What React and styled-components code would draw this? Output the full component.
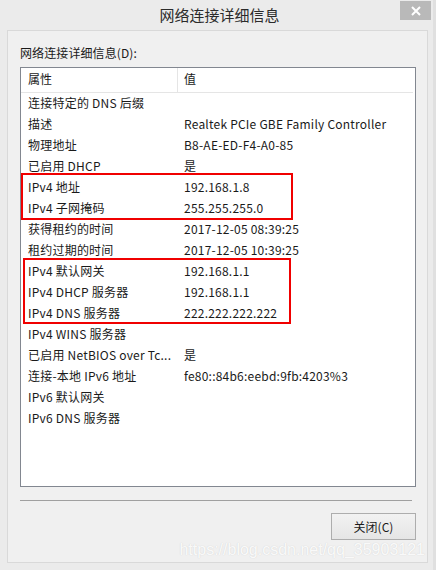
import React from "react";
import styled, { createGlobalStyle } from "styled-components";

const Global = createGlobalStyle`
  html, body { margin: 0; padding: 0; }
  body { width: 436px; height: 570px; overflow: hidden; background: #ebebeb;
    font-family: "Noto Sans CJK SC", "Noto Sans", sans-serif; }
`;

const Frame = styled.div`
  box-sizing: border-box;
  width: 436px;
  height: 570px;
  background: #ebebeb;
  border-right: 3px solid #e0e0e0;
  padding: 0 5px 7px 7px;
  display: flex;
  flex-direction: column;
`;

const TitleBar = styled.div`
  height: 30px;
  flex: none;
  display: flex;
  align-items: flex-start;
  justify-content: center;
  position: relative;
`;

const Title = styled.div`
  font-size: 15px;
  line-height: 30px;
  color: #2b2b2b;
  margin-left: 4px;
`;

const CloseBtn = styled.div`
  position: absolute;
  right: -3px;
  top: 1px;
  width: 31px;
  height: 19px;
  background: #b9b9b9;
  display: flex;
  align-items: center;
  justify-content: center;
`;

const Panel = styled.div`
  flex: 1;
  border: 1px solid #d9d9d9;
  background: #f0f0f0;
  padding: 12px 12px 0 12px;
  display: flex;
  flex-direction: column;
`;

const Label = styled.div`
  font-size: 12px;
  color: #1a1a1a;
  line-height: 20px;
  margin-bottom: 4px;
  letter-spacing: 0.1px;
`;

const ListBox = styled.div`
  height: 420px;
  width: 396px;
  box-sizing: border-box;
  border: 1px solid #828790;
  background: #fff;
  display: flex;
  flex-direction: column;
`;

const Header = styled.div`
  display: grid;
  grid-template-columns: 157px 1fr;
  height: 24px;
  border-bottom: 1px solid #e5e5e5;
  margin-right: 2px;
`;

const HeadCell = styled.div`
  font-size: 12px;
  color: #1a1a1a;
  line-height: 22px;
  padding-left: ${(p) => (p.$first ? "7px" : "6px")};
  border-right: ${(p) => (p.$first ? "1px solid #e5e5e5" : "none")};
`;

const Rows = styled.div`
  margin-top: -1px;
  display: flex;
  flex-direction: column;
`;

const Group = styled.div`
  position: relative;
`;

const RedBox = styled.div`
  position: absolute;
  left: ${(p) => p.$l}px;
  width: ${(p) => p.$w}px;
  top: ${(p) => p.$t}px;
  bottom: ${(p) => p.$b}px;
  border: 2px solid #f00000;
  pointer-events: none;
`;

const Row = styled.div`
  display: grid;
  grid-template-columns: 156px 1fr;
  height: 21px;
  align-items: center;
  font-size: 12px;
  color: #1a1a1a;
  white-space: nowrap;
  letter-spacing: 0.22px;
`;

const Cell = styled.div`
  padding-left: 7px;
  overflow: hidden;
  line-height: 21px;
`;

const Separator = styled.div`
  height: 1px;
  background: #a0a0a0;
  margin: 13px 3px 0 0;
`;

const Footer = styled.div`
  display: flex;
  justify-content: flex-end;
  margin-top: 12px;
  position: relative;
  height: 48px;
`;

const Button = styled.div`
  width: 85px;
  height: 27px;
  box-sizing: border-box;
  border: 1px solid #adadad;
  background: linear-gradient(#f2f2f2, #e5e5e5);
  font-size: 12px;
  color: #1a1a1a;
  display: flex;
  align-items: center;
  justify-content: center;
  margin-right: -1px;
`;

const Watermark = styled.div`
  position: absolute;
  right: -10px;
  top: 28px;
  font-family: "Liberation Sans", Arial, sans-serif;
  font-size: 16px;
  color: rgba(255, 255, 255, 0.9);
  text-shadow: 0 0 1px rgba(160, 160, 160, 0.45);
  white-space: nowrap;
`;

const rowsA = [
  ["连接特定的 DNS 后缀", ""],
  ["描述", "Realtek PCIe GBE Family Controller"],
  ["物理地址", "B8-AE-ED-F4-A0-85"],
  ["已启用 DHCP", "是"],
];
const rowsB = [
  ["IPv4 地址", "192.168.1.8"],
  ["IPv4 子网掩码", "255.255.255.0"],
];
const rowsC = [
  ["获得租约的时间", "2017-12-05 08:39:25"],
  ["租约过期的时间", "2017-12-05 10:39:25"],
];
const rowsD = [
  ["IPv4 默认网关", "192.168.1.1"],
  ["IPv4 DHCP 服务器", "192.168.1.1"],
  ["IPv4 DNS 服务器", "222.222.222.222"],
];
const rowsE = [
  ["IPv4 WINS 服务器", ""],
  ["已启用 NetBIOS over Tc...", "是"],
  ["连接-本地 IPv6 地址", "fe80::84b6:eebd:9fb:4203%3"],
  ["IPv6 默认网关", ""],
  ["IPv6 DNS 服务器", ""],
];

const renderRows = (rows) =>
  rows.map(([k, v]) => (
    <Row key={k}>
      <Cell>{k}</Cell>
      <Cell>{v}</Cell>
    </Row>
  ));

export default function App() {
  return (
    <>
      <Global />
      <Frame>
        <TitleBar>
          <Title>网络连接详细信息</Title>
          <CloseBtn>
            <svg width="10" height="10" viewBox="0 0 10 10">
              <path d="M1 1 L9 9 M9 1 L1 9" stroke="#fff" strokeWidth="2" />
            </svg>
          </CloseBtn>
        </TitleBar>
        <Panel>
          <Label>网络连接详细信息(D):</Label>
          <ListBox>
            <Header>
              <HeadCell $first>属性</HeadCell>
              <HeadCell>值</HeadCell>
            </Header>
            <Rows>
              {renderRows(rowsA)}
              <Group>
                <RedBox $l={0} $w={268} $t={-3} $b={-2} />
                {renderRows(rowsB)}
              </Group>
              {renderRows(rowsC)}
              <Group>
                <RedBox $l={2} $w={264} $t={-2} $b={-1} />
                {renderRows(rowsD)}
              </Group>
              {renderRows(rowsE)}
            </Rows>
          </ListBox>
          <Separator />
          <Footer>
            <Button>关闭(C)</Button>
            <Watermark>https://blog.csdn.net/qq_35903121</Watermark>
          </Footer>
        </Panel>
      </Frame>
    </>
  );
}
